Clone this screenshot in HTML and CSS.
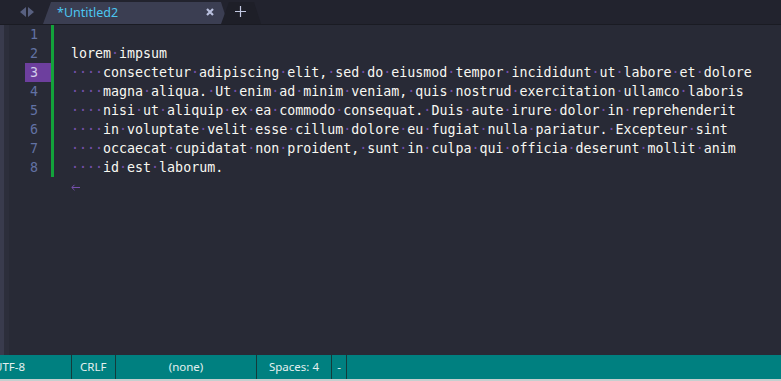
FILE: index.html
```html
<!DOCTYPE html>
<html lang="en">
<head>
    <meta charset="UTF-8">
    <title>Untitled2</title>
    <link rel="stylesheet" href="styles.css">
</head>
<body>
    <div class="window">
        <div class="tabbar">
            <div class="nav">
                <svg width="14" height="10" viewBox="0 0 14 10"><path d="M6 0 L0 5 L6 10 Z M8 0 L14 5 L8 10 Z" fill="#586080"/></svg>
            </div>
            <div class="tab active">
                <span class="tab-title">*Untitled2</span>
                <svg class="tab-close" width="8" height="8" viewBox="0 0 8 8"><path d="M1 1 L7 7 M7 1 L1 7" stroke="#b9c0de" stroke-width="2.2"/></svg>
            </div>
            <div class="tab newtab">
                <svg width="11" height="11" viewBox="0 0 11 11"><path d="M5.5 0 V11 M0 5.5 H11" stroke="#c3c9e2" stroke-width="1.2"/></svg>
            </div>
        </div>

        <div class="main">
            <div class="side"><span class="side-edge"></span></div>
            <div class="editor">
                <div class="line"><span class="ln">1</span><span class="code"></span></div>
                <div class="line"><span class="ln">2</span><span class="code">lorem<i>·</i>impsum</span></div>
                <div class="line"><span class="ln hl">3</span><span class="code"><i>····</i>consectetur<i>·</i>adipiscing<i>·</i>elit,<i>·</i>sed<i>·</i>do<i>·</i>eiusmod<i>·</i>tempor<i>·</i>incididunt<i>·</i>ut<i>·</i>labore<i>·</i>et<i>·</i>dolore</span></div>
                <div class="line"><span class="ln">4</span><span class="code"><i>····</i>magna<i>·</i>aliqua.<i>·</i>Ut<i>·</i>enim<i>·</i>ad<i>·</i>minim<i>·</i>veniam,<i>·</i>quis<i>·</i>nostrud<i>·</i>exercitation<i>·</i>ullamco<i>·</i>laboris</span></div>
                <div class="line"><span class="ln">5</span><span class="code"><i>····</i>nisi<i>·</i>ut<i>·</i>aliquip<i>·</i>ex<i>·</i>ea<i>·</i>commodo<i>·</i>consequat.<i>·</i>Duis<i>·</i>aute<i>·</i>irure<i>·</i>dolor<i>·</i>in<i>·</i>reprehenderit</span></div>
                <div class="line"><span class="ln">6</span><span class="code"><i>····</i>in<i>·</i>voluptate<i>·</i>velit<i>·</i>esse<i>·</i>cillum<i>·</i>dolore<i>·</i>eu<i>·</i>fugiat<i>·</i>nulla<i>·</i>pariatur.<i>·</i>Excepteur<i>·</i>sint</span></div>
                <div class="line"><span class="ln">7</span><span class="code"><i>····</i>occaecat<i>·</i>cupidatat<i>·</i>non<i>·</i>proident,<i>·</i>sunt<i>·</i>in<i>·</i>culpa<i>·</i>qui<i>·</i>officia<i>·</i>deserunt<i>·</i>mollit<i>·</i>anim</span></div>
                <div class="line"><span class="ln">8</span><span class="code"><i>····</i>id<i>·</i>est<i>·</i>laborum.</span></div>
                <div class="line"><span class="ln empty"></span><span class="code"><svg class="eol" width="9" height="7" viewBox="0 0 9 7"><path d="M9 3.5 H1 M3.5 0.8 L0.8 3.5 L3.5 6.2" stroke="#7650ad" stroke-width="1" fill="none"/></svg></span></div>
            </div>
        </div>

        <div class="statusbar">
            <div class="seg enc">UTF-8</div>
            <div class="seg eol-mode">CRLF</div>
            <div class="seg syntax">(none)</div>
            <div class="seg indent">Spaces: 4</div>
            <div class="seg dash">-</div>
            <div class="seg rest"></div>
        </div>
        <div class="bottom-strip"></div>
    </div>
</body>
</html>
```

FILE: styles.css
```css
body {
    margin: 0;
    width: 781px;
    height: 381px;
    overflow: hidden;
    background: #282a36;
}

.window {
    display: flex;
    flex-direction: column;
    height: 381px;
}

/* tabs */
.tabbar {
    display: flex;
    align-items: stretch;
    background: #22232e;
    border-bottom: 1px solid #1a1b23;
    padding-top: 2px;
    height: 22px;
}

.nav {
    width: 43px;
    display: flex;
    align-items: center;
    justify-content: center;
    padding-left: 10px;
    box-sizing: border-box;
    margin-top: -2px;
}

.tab {
    display: flex;
    align-items: center;
    clip-path: polygon(8px 0, calc(100% - 7px) 0, 100% 100%, 0 100%);
}

.tab.active {
    width: 185px;
    background: #3b3e52;
    padding: 0 14px;
    box-sizing: border-box;
    justify-content: space-between;
}

.tab-title {
    font-family: "Noto Sans", sans-serif;
    font-size: 12.5px;
    color: #4cc6f0;
    margin-top: -1px;
}

.tab-close {
    margin-top: -2px;
}

.tab.newtab {
    width: 40px;
    margin-left: -7px;
    background: #1e1f28;
    justify-content: center;
}

.tab.newtab svg {
    margin-top: -4px;
    margin-left: -2px;
}

/* editor */
.main {
    flex: 1;
    display: flex;
}

.side {
    width: 9px;
    display: flex;
    background: #2c2e3b;
}

.side-edge {
    width: 4px;
    background: #393b4d;
}

.editor {
    flex: 1;
    font-family: "DejaVu Sans Mono", monospace;
    font-size: 13.3px;
    color: #f8f8f2;
}

.line {
    display: flex;
    height: 19px;
    line-height: 19px;
}

.ln {
    width: 29px;
    margin-left: 16px;
    padding-right: 13px;
    box-sizing: border-box;
    text-align: right;
    color: #6272a4;
    border-right: 3px solid #13a33b;
}

.ln.hl {
    background: #6d3f9e;
    color: #d2cdea;
}

.ln.empty {
    border-right-color: transparent;
}

.code {
    padding-left: 17px;
    white-space: pre;
}

.code i {
    font-style: normal;
    color: #7650ad;
}

.eol {
    vertical-align: middle;
}

/* status */
.statusbar {
    display: flex;
    height: 24px;
    background: #008080;
    font-family: "Noto Sans", sans-serif;
    font-size: 11.5px;
    color: #e4f0f0;
    line-height: 24px;
}

.seg {
    border-right: 1px solid #153a3a;
    box-sizing: border-box;
    white-space: nowrap;
}

.enc {
    width: 72px;
    text-indent: -6px;
}

.eol-mode {
    width: 44px;
    padding-left: 8px;
}

.syntax {
    width: 141px;
    text-align: center;
}

.indent {
    width: 75px;
    text-align: center;
}

.dash {
    width: 15px;
    text-align: center;
}

.rest {
    flex: 1;
    border-right: none;
}

.bottom-strip {
    height: 2px;
    background: #c6cfcf;
}
```
